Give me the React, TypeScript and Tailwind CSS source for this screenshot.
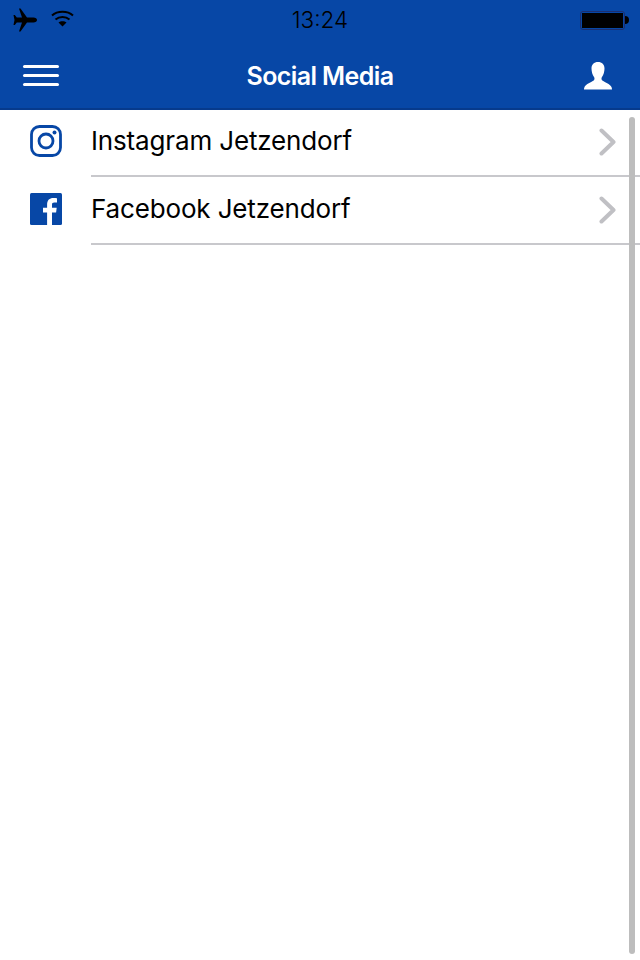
const items = [
  { name: "Instagram Jetzendorf", icon: <InstagramIcon /> },
  { name: "Facebook Jetzendorf", icon: <FacebookIcon /> },
]

function InstagramIcon() {
  return (
    <svg width="32" height="32" viewBox="0 0 32 32" fill="none">
      <rect x="1.500" y="1.500" width="29" height="29" rx="8" stroke="#0747a6" strokeWidth="2.8" />
      <circle cx="16" cy="16" r="7" stroke="#0747a6" strokeWidth="2.8" />
      <circle cx="24.500" cy="7.500" r="2" fill="#0747a6" />
    </svg>
  )
}

function FacebookIcon() {
  return (
    <svg width="32" height="32" viewBox="0 0 32 32">
      <rect width="32" height="32" rx="1.500" fill="#0747a6" />
      <path
        d="M22 32V19.600h4.100l.6-4.800H22v-3c0-1.400.4-2.300 2.400-2.300H27V5.200c-.5-.1-2-.2-3.700-.2-3.700 0-6.200 2.200-6.200 6.400v3.400H13v4.800h4.100V32z"
        fill="#ffffff"
      />
    </svg>
  )
}

function Chevron() {
  return (
    <svg width="17" height="28" viewBox="0 0 17 28" fill="none" stroke="#c0c0c4" strokeWidth="4" strokeLinecap="round" strokeLinejoin="round">
      <path d="M2.500 2.500L14.500 14L2.500 25.500" />
    </svg>
  )
}

function AirplaneIcon() {
  return (
    <svg width="24" height="24" viewBox="0 0 24 24" fill="#000000">
      <path d="M6 0.500h1.500L14 9.500h6.500c2 0 3.500 1 3.500 2.500s-1.500 2.500-3.500 2.500H14L7.500 23.500H6L9 14.500H3.800L1.800 17H0.500L1.500 12L0.500 7H1.800L3.800 9.500H9z" />
    </svg>
  )
}

function WifiIcon() {
  return (
    <svg width="23" height="17" viewBox="0 0 23 17" fill="none" stroke="#000000" strokeWidth="2">
      <path d="M1 5.500C6.500 0.500 16.500 0.500 22 5.500" />
      <path d="M4.500 9.500C8.500 6 14.500 6 18.500 9.500" />
      <path d="M11.500 16.500L7.500 12.500C9.500 10.800 13.500 10.800 15.500 12.500z" fill="#000000" stroke="none" />
    </svg>
  )
}

function UserIcon() {
  return (
    <svg width="28" height="28" viewBox="0 0 28 28" fill="#ffffff">
      <path d="M14 0c4 0 6.500 2.500 6.500 6.500 0 3-1 6.500-2.500 8.500-.7 1-.7 2.700.3 3.500 2 1.600 8 3.500 9.200 6.500.3.800.5 2 .5 2.500H0c0-.5.200-1.700.5-2.500 1.200-3 7.200-4.900 9.200-6.500 1-.8 1-2.500.3-3.500C8.500 13 7.500 9.500 7.500 6.500 7.500 2.500 10 0 14 0z" />
    </svg>
  )
}

export default function App() {
  return (
    <div className="relative h-[960px] w-[640px] overflow-hidden bg-white font-['Inter','Liberation_Sans',sans-serif]">
      {/* Status bar + nav */}
      <div className="h-[110px] border-b-2 border-[#063a8c] bg-[#0747a6]">
        <div className="flex h-10 items-center justify-between pl-[13px] pr-[11px]">
          <div className="flex w-[100px] items-center gap-[14px]">
            <AirplaneIcon />
            <div className="-mt-[4px]">
              <WifiIcon />
            </div>
          </div>
          <span className="pr-[2px] pt-[1px] text-[22.5px] font-light leading-none text-black">13:24</span>
          <div className="flex w-[100px] items-center justify-end">
            <div className="h-[19px] w-[45px] rounded-[3px] border border-[#1c2f6e] p-[1px]">
              <div className="h-full w-full bg-black"></div>
            </div>
            <div className="h-[8px] w-[4px] rounded-r-full bg-black"></div>
          </div>
        </div>
        <div className="flex h-[67px] items-center justify-between pl-[23px] pr-[28px]">
          <div className="flex w-9 flex-col gap-[6px] pt-[4px]">
            <div className="h-[3px] rounded-full bg-white"></div>
            <div className="h-[3px] rounded-full bg-white"></div>
            <div className="h-[3px] rounded-full bg-white"></div>
          </div>
          <span className="-ml-[3px] pt-[6px] text-[25px] font-semibold tracking-[-0.6px] text-white">Social Media</span>
          <div className="flex pt-[5px]">
            <UserIcon />
          </div>
        </div>
      </div>

      {/* List */}
      <div className="-mt-px">
        {items.map((item) => (
          <div key={item.name} className="flex h-[68px] items-center">
            <div className="flex w-[91px] shrink-0 justify-center pb-[5px]">{item.icon}</div>
            <div className="flex h-full flex-1 items-center justify-between border-b-2 border-[#c8c8cc] pr-[24px]">
              <span className="pb-[4px] text-[26px] tracking-[-0.15px] text-black">{item.name}</span>
              <Chevron />
            </div>
          </div>
        ))}
      </div>

      {/* Scroll indicator */}
      <div className="absolute left-[629px] top-[117px] h-[837px] w-[6px] rounded-sm bg-[#bdbdbd]"></div>
    </div>
  )
}
